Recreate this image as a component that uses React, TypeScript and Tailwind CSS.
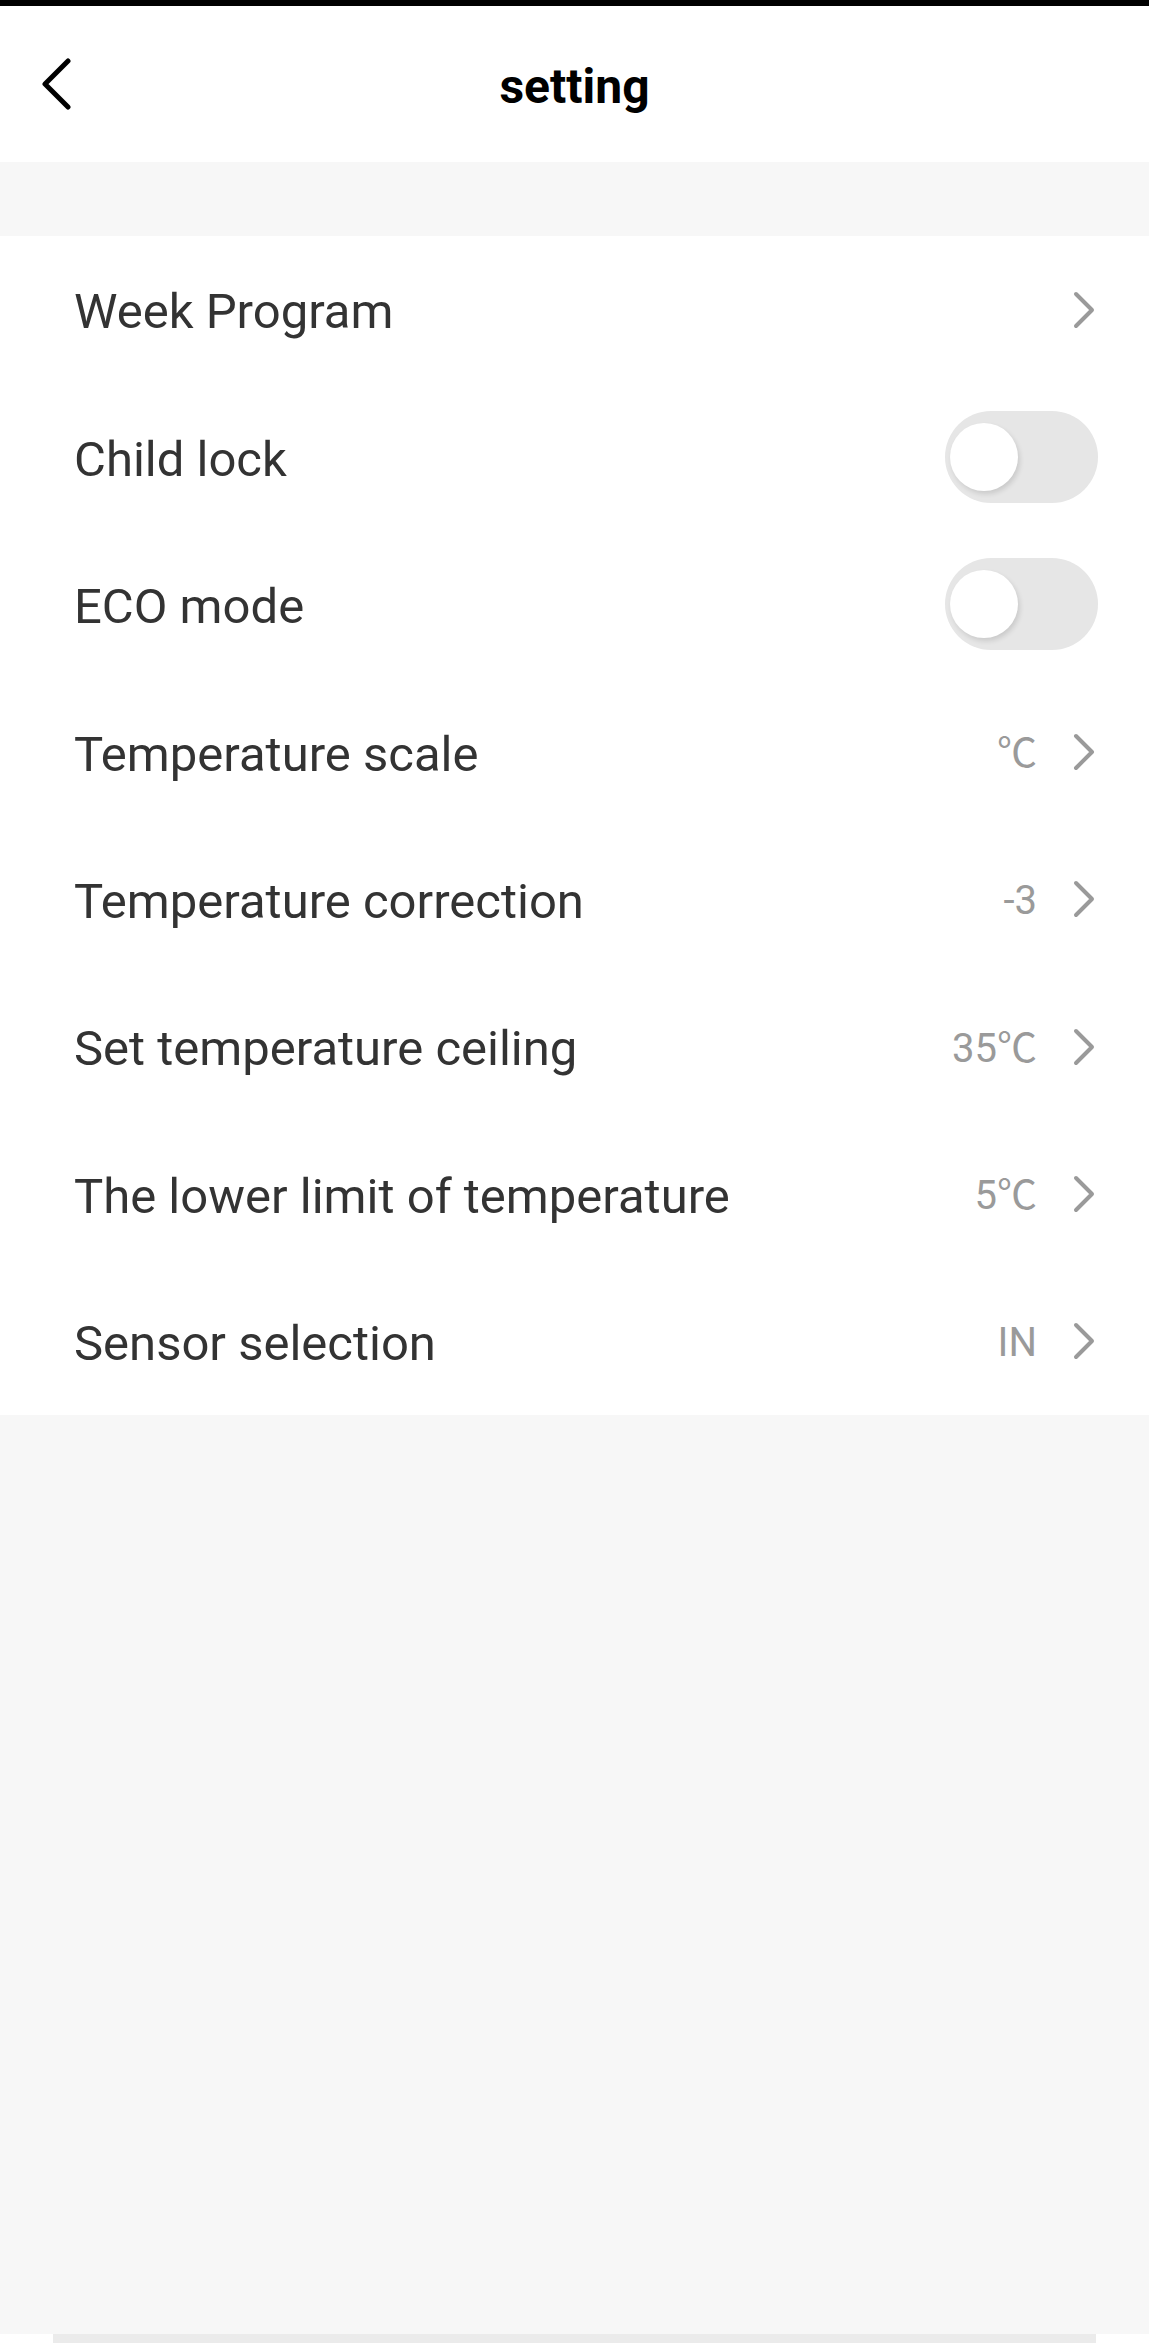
import React from 'react'

type Row =
  | { label: string; kind: 'link'; value?: string }
  | { label: string; kind: 'toggle'; on: boolean }

const rows: Row[] = [
  { label: 'Week Program', kind: 'link' },
  { label: 'Child lock', kind: 'toggle', on: false },
  { label: 'ECO mode', kind: 'toggle', on: false },
  { label: 'Temperature scale', kind: 'link', value: '℃' },
  { label: 'Temperature correction', kind: 'link', value: '-3' },
  { label: 'Set temperature ceiling', kind: 'link', value: '35℃' },
  { label: 'The lower limit of temperature', kind: 'link', value: '5℃' },
  { label: 'Sensor selection', kind: 'link', value: 'IN' },
]

function ChevronRight() {
  return (
    <svg width="22" height="38" viewBox="0 0 22 38" className="shrink-0">
      <polyline
        points="3,3 19,19 3,35"
        fill="none"
        stroke="#9a9a9a"
        strokeWidth="4"
        strokeLinecap="round"
        strokeLinejoin="round"
      />
    </svg>
  )
}

function Toggle({ on }: { on: boolean }) {
  return (
    <div className="flex h-[92px] w-[153px] items-center rounded-full bg-[#e6e6e6] pl-[5px]">
      <div className="h-[68px] w-[68px] rounded-full bg-white shadow-[2px_3px_5px_rgba(0,0,0,0.12)]" />
    </div>
  )
}

export default function App() {
  return (
    <div className="flex h-[2343px] w-full flex-col bg-[#f7f7f7] font-['Roboto','Noto_Sans_CJK_SC',sans-serif]">
      <div className="h-[6px] bg-black" />

      <header className="relative flex h-[156px] items-center justify-center bg-white">
        <button className="absolute left-[40px] top-1/2 -translate-y-1/2">
          <svg width="32" height="52" viewBox="0 0 32 52">
            <polyline
              points="28,3 5,26 28,49"
              fill="none"
              stroke="#000"
              strokeWidth="5"
              strokeLinecap="round"
              strokeLinejoin="round"
            />
          </svg>
        </button>
        <h1 className="pt-[6px] text-[48px] font-bold text-black">setting</h1>
      </header>

      <div className="h-[74px]" />

      <div className="bg-white">
        {rows.map((row) => (
          <div
            key={row.label}
            className="flex h-[147.375px] items-center justify-between pl-[74px] pr-[51px]"
          >
            <span className="pt-[5px] text-[49px] text-[#333333]">{row.label}</span>
            {row.kind === 'toggle' ? (
              <Toggle on={row.on} />
            ) : (
              <div className="flex items-center gap-[36px] pr-[3px]">
                {row.value && (
                  <span className="pt-[4px] text-[40px] text-[#9a9a9a]">{row.value}</span>
                )}
                <ChevronRight />
              </div>
            )}
          </div>
        ))}
      </div>

      <div className="flex-1" />

      <div className="flex h-[9px] justify-center bg-white">
        <div className="h-full w-[1043px] bg-[#ebebeb]" />
      </div>
    </div>
  )
}
